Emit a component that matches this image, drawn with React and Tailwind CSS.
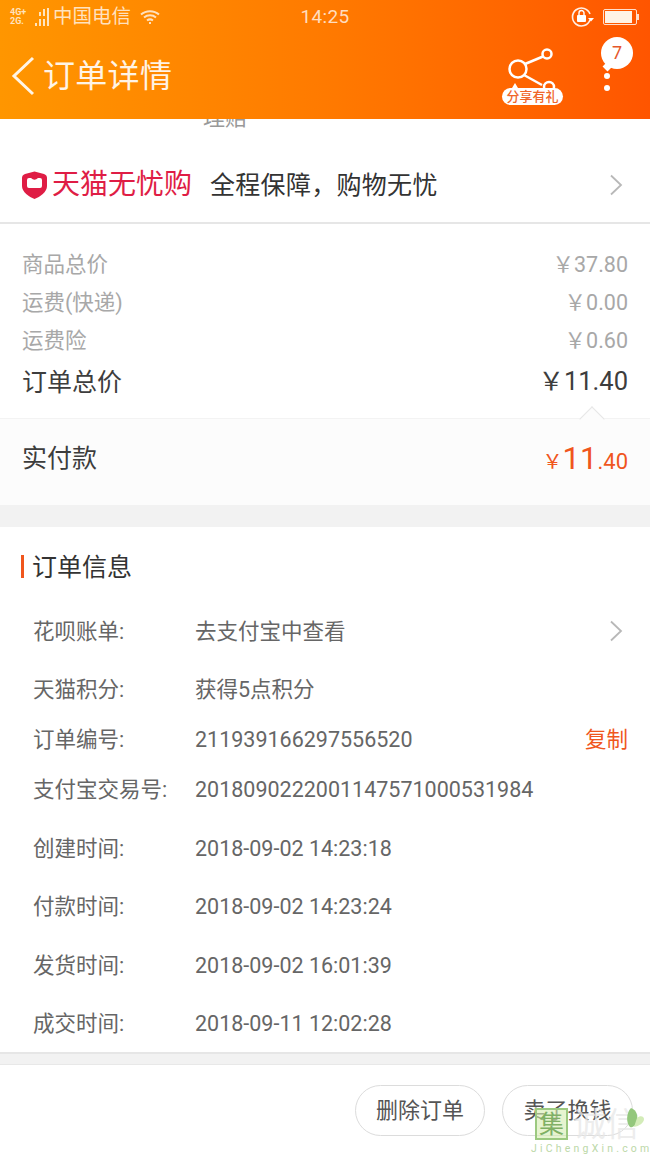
import React from "react";

const font = { fontFamily: '"Roboto", "Noto Sans CJK SC", sans-serif' };

function Signal() {
  return (
    <div className="ml-[3px] flex h-[18px] items-end gap-[2px]">
      <div className="h-[3px] w-[2px] bg-white/75" />
      <div className="flex flex-col gap-[3px]"><div className="h-[4px] w-[2px] bg-white/75" /><div className="h-[7px] w-[2px] bg-white/75" /></div>
      <div className="flex flex-col gap-[3px]"><div className="h-[7px] w-[2px] bg-white/75" /><div className="h-[7px] w-[2px] bg-white/75" /></div>
      <div className="h-[18px] w-[2px] bg-white/75" />
    </div>
  );
}

function Chevron({ className = "" }) {
  return (
    <svg width="14" height="22" viewBox="0 0 14 22" fill="none" className={className}>
      <path d="M2 1.5 L12 11 L2 20.5" stroke="#b8b8b8" strokeWidth="1.8" />
    </svg>
  );
}

function Header() {
  return (
    <header className="relative z-10 h-[119px] shrink-0 bg-gradient-to-r from-[#ff9600] via-[#ff7a00] to-[#ff5500] text-white">
      <div className="flex h-[33px] items-center justify-between pl-[10px] pr-[11px]">
        <div className="flex items-center">
          <div className="flex w-[22px] flex-col text-[9px] font-bold leading-[9px] text-white/75"><span>4G+</span><span>2G.</span></div>
          <Signal />
          <span className="ml-[4px] text-[19.5px] leading-none text-white/75">中国电信</span>
          <svg width="22" height="16" viewBox="0 0 22 16" fill="none" className="ml-[8px]" stroke="#ffffff" strokeOpacity="0.75" strokeWidth="2">
            <path d="M2 5.5 C7 1 15 1 20 5.5" />
            <path d="M5 8.5 C8.5 5.5 13.5 5.5 17 8.5" />
            <path d="M8 11.5 C10 10 12 10 14 11.5" />
            <circle cx="11" cy="14" r="1" fill="#fff" stroke="none" />
          </svg>
        </div>
        <div className="flex items-center">
          <svg width="24" height="22" viewBox="0 0 24 22" fill="none" className="mr-[8px]">
            <path d="M19 14 A9 9 0 1 1 19 8" stroke="#fff" strokeOpacity="0.9" strokeWidth="1.6" />
            <path d="M17 12 H23 L20 15.5 Z" fill="#fff" />
            <rect x="6" y="9" width="9" height="7" rx="1" fill="#fff" />
            <path d="M8 9 V7 A2.5 2.5 0 0 1 13 7 V9" stroke="#fff" strokeWidth="1.4" />
          </svg>
          <div className="flex items-center">
            <div className="flex h-[16px] w-[34px] rounded-[2px] border border-white/80 p-[1px]">
              <div className="w-[27px] bg-[#fff3e6]" />
            </div>
            <div className="h-[6px] w-[2px] bg-white/80" />
          </div>
        </div>
      </div>
      <div className="absolute left-0 right-0 top-[6px] text-center text-[19px] leading-[21px] tracking-[0.3px] text-white/75">14:25</div>
      <div className="flex h-[86px] items-center">
        <svg width="24" height="40" viewBox="0 0 24 40" fill="none" className="ml-[11px]">
          <path d="M22 2 L3 20 L22 38" stroke="#fff" strokeOpacity="0.9" strokeWidth="3" />
        </svg>
        <h1 className="ml-[8px] text-[32px] font-normal leading-none tracking-[0.3px] text-white/90">订单详情</h1>
        <div className="relative ml-auto mr-[14px] h-[86px] w-[150px]">
          <svg width="80" height="70" viewBox="0 0 80 70" fill="none" className="absolute left-0 top-0">
            <circle cx="32" cy="36" r="8.5" stroke="#fff" strokeWidth="2.5" />
            <circle cx="61" cy="21" r="4.5" stroke="#fff" strokeWidth="2.5" />
            <path d="M39 31 L57 23.5" stroke="#fff" strokeWidth="2.5" />
            <path d="M38 42 L56 52" stroke="#fff" strokeWidth="2.5" />
            <circle cx="63" cy="54" r="5" stroke="#fff" strokeWidth="2.5" />
            <path d="M26 55 L29 50 L32 55 Z" fill="#fff" />
          </svg>
          <div className="absolute left-[16px] top-[55px] flex h-[17px] w-[61px] items-center justify-center rounded-full bg-white text-[13px] font-medium leading-none text-[#f0662a]">分享有礼</div>
          <div className="absolute left-[118px] top-[30px] h-[7px] w-[7px] rotate-45 bg-white" />
          <div className="absolute left-[115px] top-[4px] flex h-[32px] w-[32px] items-center justify-center rounded-full bg-white text-[18px] leading-none text-[#e5572b]">7</div>
          <div className="absolute left-[118px] top-[40px] h-[6px] w-[6px] rounded-full bg-white" />
          <div className="absolute left-[118px] top-[52px] h-[6px] w-[6px] rounded-full bg-white" />
        </div>
      </div>
    </header>
  );
}

function Tmall() {
  return (
    <section className="h-[105px] shrink-0 overflow-hidden border-b-2 border-[#e6e6e6] bg-white">
      <div className="-mt-[12px] ml-[203px] h-[22px] text-[22px] leading-[22px] text-[#999]">理赔</div>
      <div className="flex h-[89px] items-center pl-[22px] pr-[27px] pt-[23px]">
        <svg width="25" height="28" viewBox="0 0 25 28" className="shrink-0">
          <path d="M12.5 0.5 L22 3 Q25 4 25 7 V15 C25 21 18 26 12.5 28 C7 26 0 21 0 15 V7 Q0 4 3 3 Z" fill="#df1d45" />
          <path d="M5 9 Q5 7 7 7 L9 7 Q12.5 10.5 16 7 L18 7 Q20 7 20 9 V15 Q20 17 18 17 H7 Q5 17 5 15 Z" fill="#fff" />
        </svg>
        <span className="ml-[5px] text-[28px] leading-none text-[#df1d45]">天猫无忧购</span>
        <span className="ml-[18px] text-[25px] leading-none tracking-[0.3px] text-[#333]">全程保障，购物无忧</span>
        <Chevron className="ml-auto" />
      </div>
    </section>
  );
}

function PriceRow({ label, value, height }) {
  return (
    <div className={`flex items-center justify-between text-[21.5px] leading-none text-[#a8a8a8] ${height}`}>
      <span>{label}</span>
      <span>{value}</span>
    </div>
  );
}

function Prices() {
  return (
    <section className="relative shrink-0 bg-white">
      <div className="px-[22px] pb-[14px] pt-[22px]">
        <PriceRow label="商品总价" value="￥37.80" height="h-[38px]" />
        <PriceRow label="运费(快递)" value="￥0.00" height="h-[38px]" />
        <PriceRow label="运费险" value="￥0.60" height="h-[38px]" />
        <div className="flex h-[44px] items-center justify-between text-[25px] leading-none text-[#3d3d3d]">
          <span>订单总价</span>
          <span className="text-[25.5px]">￥11.40</span>
        </div>
      </div>
      <div className="relative flex h-[87px] items-center justify-between border-t border-[#f3f3f3] bg-[#fcfcfc] px-[22px] pb-[8px]">
        <div className="absolute -top-[9px] right-[49px] h-[18px] w-[18px] rotate-45 border-l border-t border-[#e6e6e6] bg-[#fcfcfc]" />
        <span className="relative text-[25px] leading-none text-[#3d3d3d]">实付款</span>
        <span className="relative flex items-baseline text-[#f0561d]">
          <span className="text-[20px] leading-none">￥</span>
          <span className="text-[31px] leading-none">11</span>
          <span className="text-[22px] leading-none">.40</span>
        </span>
      </div>
    </section>
  );
}

const rows = [
  { label: "花呗账单:", value: "去支付宝中查看", h: "h-[58px]", chevron: true },
  { label: "天猫积分:", value: "获得5点积分", h: "h-[58px]" },
  { label: "订单编号:", value: "211939166297556520", h: "h-[42px]", copy: true },
  { label: "支付宝交易号:", value: "2018090222001147571000531984", h: "h-[58px]" },
  { label: "创建时间:", value: "2018-09-02 14:23:18", h: "h-[59px]" },
  { label: "付款时间:", value: "2018-09-02 14:23:24", h: "h-[58px]" },
  { label: "发货时间:", value: "2018-09-02 16:01:39", h: "h-[59px]" },
  { label: "成交时间:", value: "2018-09-11 12:02:28", h: "h-[58px]" },
];

function OrderInfo() {
  return (
    <section className="shrink-0 border-b-2 border-[#e6e6e6] bg-white">
      <div className="flex h-[75px] items-center pl-[21px] pt-[4px]">
        <div className="h-[23px] w-[3px] bg-[#f0561d]" />
        <h2 className="ml-[8px] pt-[2px] text-[25px] font-normal leading-none text-[#333]">订单信息</h2>
      </div>
      {rows.map((r) => (
        <div key={r.label} className={`flex items-center pl-[33px] pr-[22px] pt-[2px] text-[21.5px] leading-none text-[#666] ${r.h}`}>
          <span className="w-[162px] shrink-0">{r.label}</span>
          <span className="whitespace-nowrap">{r.value}</span>
          {r.chevron && <Chevron className="ml-auto mr-[5px] -mt-[3px]" />}
          {r.copy && <span className="ml-auto text-[#f0561d]">复制</span>}
        </div>
      ))}
    </section>
  );
}

function Footer() {
  return (
    <footer className="mt-[10px] flex h-[91px] shrink-0 justify-end gap-[17px] border-t border-[#e8e8e8] bg-white pr-[17px] pt-[20px]">
      <button className="h-[51px] w-[130px] rounded-full border border-[#dcdcdc] text-[22px] leading-none text-[#555]">删除订单</button>
      <button className="h-[51px] w-[131px] rounded-full border border-[#dcdcdc] text-[22px] leading-none text-[#555]">卖了换钱</button>
    </footer>
  );
}

function Watermark() {
  return (
    <div className="pointer-events-none absolute left-[530px] top-[1106px] h-[49px] w-[120px]">
      <div className="absolute left-[5px] top-[2px] flex h-[32px] w-[33px] items-center justify-center border-2 border-[#9cc980] bg-[#d6ecb0]/60 text-[25px] leading-none text-[#7fb065]">集</div>
      <div className="absolute left-[43px] top-[2px] text-[33px] leading-none text-[#e8e8e8]/80">诚信</div>
      <svg width="20" height="24" viewBox="0 0 20 24" className="absolute left-[95px] top-[1px]">
        <path d="M6 1 C12 3 13 9 12 14 C11 19 7 21 5 20 C1 16 1 6 6 1 Z" fill="#93c77c" />
        <path d="M12 11 C15 8 19 9 19 12 C19 16 14 19 9 20 Z" fill="#d3ecb8" />
      </svg>
      <div className="absolute left-[1px] top-[38px] whitespace-nowrap text-[10.5px] leading-none tracking-[3.2px] text-[#bcd8a8]">JiChengXin.com</div>
    </div>
  );
}

export default function App() {
  return (
    <div style={font} className="relative flex h-[1155px] w-[650px] flex-col overflow-hidden bg-[#f2f2f2]">
      <Header />
      <Tmall />
      <Prices />
      <div className="h-[22px] shrink-0 bg-[#f2f2f2]" />
      <OrderInfo />
      <Footer />
      <Watermark />
    </div>
  );
}
